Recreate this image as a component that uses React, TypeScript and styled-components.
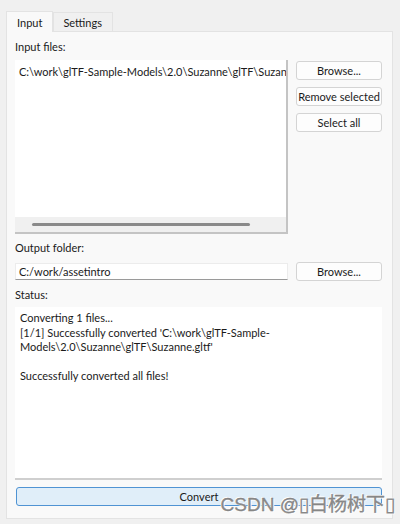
import React from 'react';
import styled, {createGlobalStyle} from "styled-components";

const GlobalStyle = createGlobalStyle`
  html, body {
    margin: 0;
    padding: 0;
    background: #f0f0f0;
  }
  body {
    font-family: Lato, "Open Sans", sans-serif;
    font-size: 11px;
    color: #1a1a1a;
  }
`;

const Window = styled.div`
  position: relative;
  width: 400px;
  height: 524px;
  box-sizing: border-box;
  padding: 10px 7px 5px 6px;
  background: #f0f0f0;
  overflow: hidden;
`;
const TabBar = styled.div`
  display: flex;
  align-items: flex-end;
  height: 21px;
`;
const Tab = styled.div<{active?: boolean}>`
  box-sizing: border-box;
  height: ${p => p.active ? '21px' : '19px'};
  padding: 0 10px 0 ${p => p.active ? '10px' : '9px'};
  display: flex;
  align-items: center;
  background: ${p => p.active ? '#f9f9f9' : '#f0f0f0'};
  border: 1px solid #e3e3e3;
  border-bottom: none;
  margin-bottom: ${p => p.active ? '-1px' : '0'};
  position: relative;
  z-index: ${p => p.active ? 1 : 0};
  color: #1a1a1a;
`;
const Panel = styled.div`
  box-sizing: border-box;
  height: 488px;
  background: #f9f9f9;
  border: 1px solid #e3e3e3;
  padding: 7px 10px 0 8px;
  display: flex;
  flex-direction: column;
`;
const Label = styled.div<{gap?: number}>`
  height: 16px;
  line-height: 16px;
  margin-top: ${p => p.gap || 0}px;
  color: #1a1a1a;
`;
const FilesRow = styled.div`
  display: flex;
  gap: 8px;
  margin-top: 5px;
`;
const ListBox = styled.div`
  box-sizing: border-box;
  width: 273px;
  height: 174px;
  background: #fff;
  border-right: 2px solid #c4c4c4;
  border-bottom: 2px solid #c4c4c4;
  display: flex;
  flex-direction: column;
`;
const ListItems = styled.div`
  flex: 1;
  padding: 4px 0 0 4px;
  white-space: nowrap;
  overflow: hidden;
  line-height: 15px;
`;
const HScroll = styled.div`
  height: 15px;
  background: #f0f0f0;
  display: flex;
  align-items: center;
  padding-left: 17px;
`;
const Thumb = styled.div`
  height: 3px;
  border-radius: 2px;
  background: #8a8a8a;
`;
const ButtonColumn = styled.div`
  display: flex;
  flex-direction: column;
  gap: 7px;
  padding-top: 1px;
`;
const Button = styled.button<{wide?: boolean}>`
  box-sizing: border-box;
  width: ${p => p.wide ? '100%' : '86px'};
  height: 19px;
  padding: 0;
  font: inherit;
  white-space: nowrap;
  color: #1a1a1a;
  background: ${p => p.wide ? '#e0eef9' : '#fdfdfd'};
  border: 1px solid ${p => p.wide ? '#4f93d3' : '#d4d4d4'};
  border-radius: 3px;
  line-height: 17px;
`;
const FieldRow = styled.div`
  display: flex;
  align-items: center;
  gap: 8px;
  margin-top: 6px;
`;
const TextField = styled.div`
  box-sizing: border-box;
  width: 273px;
  height: 17px;
  background: #fff;
  border: 1px solid #ececec;
  border-bottom: 1px solid #9a9a9a;
  padding-left: 3px;
  line-height: 15px;
`;
const StatusBox = styled.div`
  box-sizing: border-box;
  height: 173px;
  margin-top: 4px;
  background: #fff;
  border-bottom: 2px solid #cfcfcf;
  padding: 4px 5px;
  line-height: 14.5px;
`;
const Line = styled.div`
  min-height: 14.5px;
`;
const ConvertRow = styled.div`
  margin-top: 7px;
  padding-left: 1px;
`;
const Watermark = styled.div`
  position: absolute;
  right: 5px;
  bottom: 9px;
  font-family: "Liberation Sans", "Noto Sans CJK SC", sans-serif;
  font-size: 19px;
  line-height: 20px;
  color: #8c8c8c;
  -webkit-text-stroke: 0.3px #777;
  text-shadow: 0 0 1px #fff, 1px 1px 0 #fff, -1px -1px 0 #fff;
  white-space: nowrap;
`;

const statusLines = [
    "Converting 1 files...",
    "[1/1] Successfully converted 'C:\\work\\glTF-Sample-",
    "Models\\2.0\\Suzanne\\glTF\\Suzanne.gltf'",
    "",
    "Successfully converted all files!",
]

const App = () => {
    return (
        <Window>
            <GlobalStyle/>
            <TabBar>
                <Tab active>Input</Tab>
                <Tab>Settings</Tab>
            </TabBar>
            <Panel>
                <Label>Input files:</Label>
                <FilesRow>
                    <ListBox>
                        <ListItems>C:\work\glTF-Sample-Models\2.0\Suzanne\glTF\Suzanne.gltf</ListItems>
                        <HScroll>
                            <Thumb style={{width: 218}}/>
                        </HScroll>
                    </ListBox>
                    <ButtonColumn>
                        <Button>Browse...</Button>
                        <Button>Remove selected</Button>
                        <Button>Select all</Button>
                    </ButtonColumn>
                </FilesRow>
                <Label gap={6}>Output folder:</Label>
                <FieldRow>
                    <TextField>C:/work/assetintro</TextField>
                    <Button>Browse...</Button>
                </FieldRow>
                <Label gap={6}>Status:</Label>
                <StatusBox>
                    {statusLines.map((line, i) => (
                        <Line key={i}>{line}</Line>
                    ))}
                </StatusBox>
                <ConvertRow>
                    <Button wide>Convert</Button>
                </ConvertRow>
            </Panel>
            <Watermark>CSDN @&#x25AF;白杨树下&#x25AF;</Watermark>
        </Window>
    );
}

export default App;
